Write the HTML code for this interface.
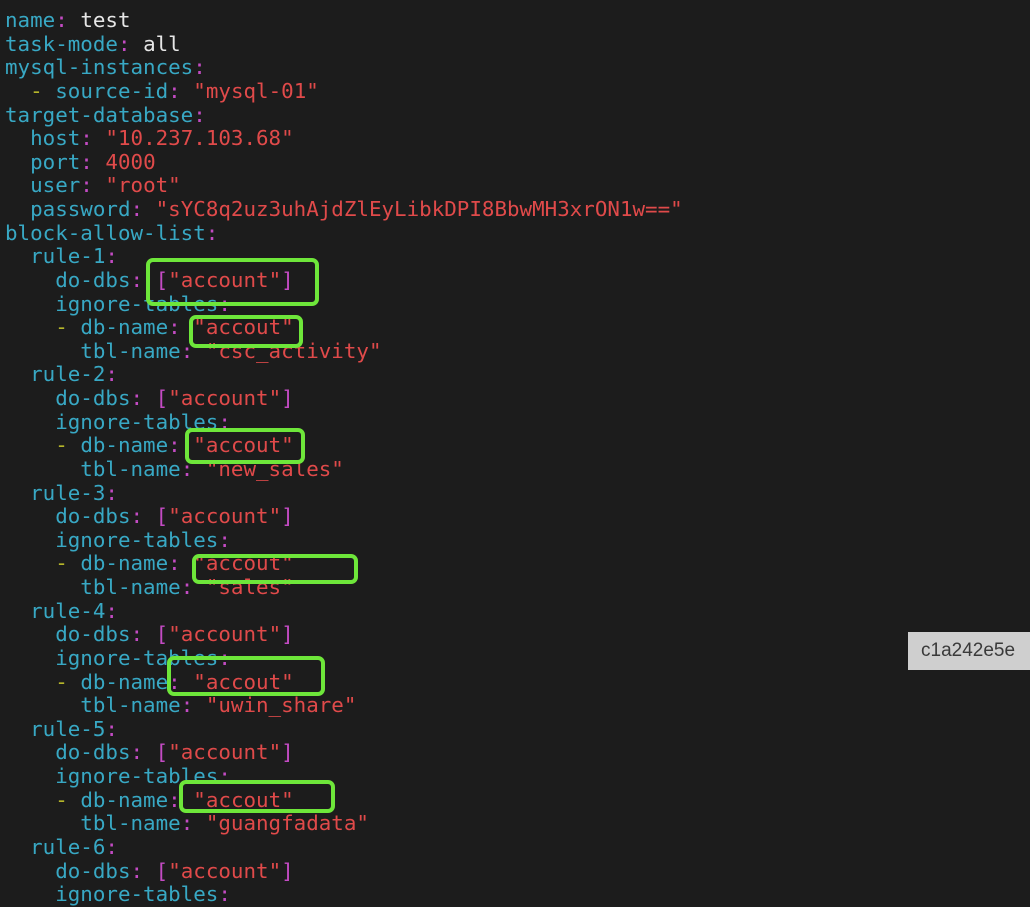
<!DOCTYPE html><html><head><style>
body{margin:0;width:1030px;height:896px;background:#1c1c1c;overflow:hidden;position:relative}
pre{margin:0;position:absolute;left:5px;top:9px;font-family:"DejaVu Sans Mono","Liberation Mono",monospace;font-size:20.85px;line-height:23.62px;color:#38a8c4}
.r{color:#e04a4a}.m{color:#c44bc4}.y{color:#b5b52a}.w{color:#e6e6e6}
.b{position:absolute;border:4px solid #6ee63a;border-radius:7px;box-sizing:border-box}
.tip{position:absolute;left:908px;top:632px;width:130px;height:38px;background:#cfcfcf;color:#3a3a3a;font:19px "Liberation Sans",sans-serif;line-height:38px;padding-left:13px;box-sizing:border-box}
</style></head><body>
<pre>name<span class="m">:</span> <span class="w">test</span>
task-mode<span class="m">:</span> <span class="w">all</span>
mysql-instances<span class="m">:</span>
  <span class="y">-</span> source-id<span class="m">:</span> <span class="r">"mysql-01"</span>
target-database<span class="m">:</span>
  host<span class="m">:</span> <span class="r">"10.237.103.68"</span>
  port<span class="m">:</span> <span class="r">4000</span>
  user<span class="m">:</span> <span class="r">"root"</span>
  password<span class="m">:</span> <span class="r">"sYC8q2uz3uhAjdZlEyLibkDPI8BbwMH3xrON1w=="</span>
block-allow-list<span class="m">:</span>
  rule-1<span class="m">:</span>
    do-dbs<span class="m">:</span> <span class="m">[</span><span class="r">"account"</span><span class="m">]</span>
    ignore-tables<span class="m">:</span>
    <span class="y">-</span> db-name<span class="m">:</span> <span class="r">"accout"</span>
      tbl-name<span class="m">:</span> <span class="r">"csc_activity"</span>
  rule-2<span class="m">:</span>
    do-dbs<span class="m">:</span> <span class="m">[</span><span class="r">"account"</span><span class="m">]</span>
    ignore-tables<span class="m">:</span>
    <span class="y">-</span> db-name<span class="m">:</span> <span class="r">"accout"</span>
      tbl-name<span class="m">:</span> <span class="r">"new_sales"</span>
  rule-3<span class="m">:</span>
    do-dbs<span class="m">:</span> <span class="m">[</span><span class="r">"account"</span><span class="m">]</span>
    ignore-tables<span class="m">:</span>
    <span class="y">-</span> db-name<span class="m">:</span> <span class="r">"accout"</span>
      tbl-name<span class="m">:</span> <span class="r">"sales"</span>
  rule-4<span class="m">:</span>
    do-dbs<span class="m">:</span> <span class="m">[</span><span class="r">"account"</span><span class="m">]</span>
    ignore-tables<span class="m">:</span>
    <span class="y">-</span> db-name<span class="m">:</span> <span class="r">"accout"</span>
      tbl-name<span class="m">:</span> <span class="r">"uwin_share"</span>
  rule-5<span class="m">:</span>
    do-dbs<span class="m">:</span> <span class="m">[</span><span class="r">"account"</span><span class="m">]</span>
    ignore-tables<span class="m">:</span>
    <span class="y">-</span> db-name<span class="m">:</span> <span class="r">"accout"</span>
      tbl-name<span class="m">:</span> <span class="r">"guangfadata"</span>
  rule-6<span class="m">:</span>
    do-dbs<span class="m">:</span> <span class="m">[</span><span class="r">"account"</span><span class="m">]</span>
    ignore-tables<span class="m">:</span></pre>
<div class="b" style="left:146px;top:258px;width:173px;height:48px"></div>
<div class="b" style="left:189px;top:315px;width:114px;height:33px"></div>
<div class="b" style="left:185px;top:428px;width:120px;height:36px"></div>
<div class="b" style="left:192px;top:554px;width:166px;height:30px"></div>
<div class="b" style="left:167px;top:656px;width:158px;height:40px"></div>
<div class="b" style="left:179px;top:780px;width:156px;height:33px"></div>
<div class="tip">c1a242e5e</div>
</body></html>
